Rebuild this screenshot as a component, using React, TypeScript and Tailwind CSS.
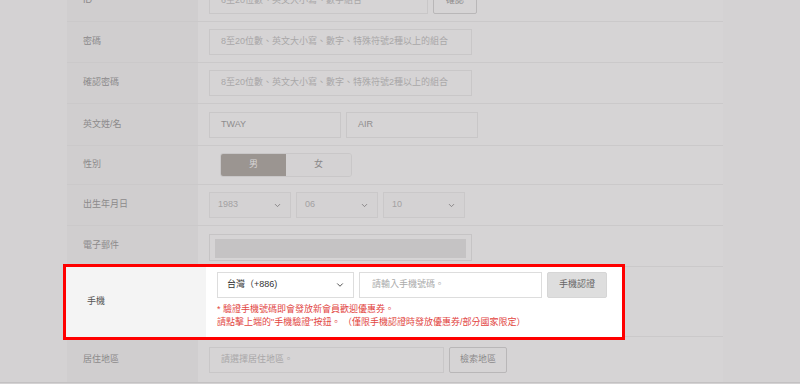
import React from 'react';
import { ChevronDown } from 'lucide-react';

const font = "font-['Liberation_Sans','Noto_Sans_CJK_TC',sans-serif]";

interface RowProps {
  label: string;
  h: string;
  children?: React.ReactNode;
}

const Row: React.FC<RowProps> = ({ label, h, children }) => (
  <div className={`flex border-b border-[#cbc9ca] ${h}`}>
    <div className="w-[131px] shrink-0 bg-[#d0cecf] flex items-center pl-[16px] text-[9px] text-[#8c8a8b]">
      {label}
    </div>
    <div className="flex-1 bg-[#d6d4d5] flex items-center pl-[11px]">{children}</div>
  </div>
);

const DimInput = ({ text, w, value }: { text: string; w: string; value?: boolean }) => (
  <div
    className={`${w} h-[26px] border border-[#c9c7c8] bg-[#d6d4d5] flex items-center px-[11px] text-[9px] ${
      value ? 'text-[#8e8c8d]' : 'text-[#a9a7a8]'
    }`}
  >
    {text}
  </div>
);

const DimSelect = ({ text }: { text: string }) => (
  <div className="w-[82px] h-[26px] border border-[#cac8c9] bg-[#d4d2d3] flex items-center justify-between pl-[8px] pr-[8px] text-[9px] text-[#a3a1a2]">
    <span>{text}</span>
    <ChevronDown size={9} strokeWidth={2.2} className="text-[#7c7a7b]" />
  </div>
);

const DimButton = ({ text, w }: { text: string; w: string }) => (
  <div
    className={`${w} h-[26px] border border-[#b9b7b8] rounded-[2px] bg-[#d6d4d5] flex items-center justify-center text-[9px] text-[#8c8a8b]`}
  >
    {text}
  </div>
);

export default function App() {
  return (
    <div className={`relative w-[800px] h-[384px] overflow-hidden bg-[#d4d2d3] ${font}`}>
      <div className="ml-[67px] w-[656px] -mt-[19px]">
        <Row label="ID" h="h-[41px]">
          <div className="flex gap-[5px] items-center">
            <DimInput w="w-[219px]" text="6至20位數、英文大小寫、數字組合" />
            <DimButton w="w-[44px]" text="確認" />
          </div>
        </Row>
        <Row label="密碼" h="h-[41px]">
          <DimInput w="w-[263px]" text="8至20位數、英文大小寫、數字、特殊符號2種以上的組合" />
        </Row>
        <Row label="確認密碼" h="h-[41px]">
          <DimInput w="w-[263px]" text="8至20位數、英文大小寫、數字、特殊符號2種以上的組合" />
        </Row>
        <Row label="英文姓/名" h="h-[42px]">
          <div className="flex gap-[5px]">
            <DimInput w="w-[132px]" text="TWAY" value />
            <DimInput w="w-[132px]" text="AIR" value />
          </div>
        </Row>
        <Row label="性別" h="h-[39px]">
          <div className="ml-[11px] flex w-[132px] h-[24px] rounded-[3px] border border-[#c9c7c8] overflow-hidden text-[9px]">
            <div className="w-1/2 bg-[#9b9591] text-[#d8d6d7] flex items-center justify-center">男</div>
            <div className="w-1/2 bg-[#d4d2d3] text-[#8a8889] flex items-center justify-center">女</div>
          </div>
        </Row>
        <Row label="出生年月日" h="h-[41px]">
          <div className="flex gap-[5px]">
            <DimSelect text="1983" />
            <DimSelect text="06" />
            <DimSelect text="10" />
          </div>
        </Row>
        <Row label="電子郵件" h="h-[41px]">
          <div className="w-[263px] h-[27px] mt-[8px] self-start border border-[#c6c4c5] pt-[4px] px-[5px] pb-[2px]">
            <div className="w-full h-full bg-[#c5c3c4]" />
          </div>
        </Row>
        <Row label="" h="h-[70px]" />
        <div className="flex h-[45px]">
          <div className="w-[131px] shrink-0 bg-[#d0cecf] flex items-center pl-[16px] text-[9px] text-[#8c8a8b]">
            居住地區
          </div>
          <div className="flex-1 bg-[#d6d4d5] flex items-center pl-[11px] gap-[5px]">
            <DimInput w="w-[235px]" text="請選擇居住地區。" />
            <DimButton w="w-[58px]" text="檢索地區" />
          </div>
        </div>
      </div>
      <div className="border-t border-[#c3c1c2] h-[2px]" />

      <div className="absolute left-[63px] top-[264px] w-[562px] h-[76px] border-[3px] border-[#ff0000] flex">
        <div className="w-[140px] shrink-0 bg-[#f4f4f4] flex items-center pl-[21px] text-[9px] text-[#555555]">
          手機
        </div>
        <div className="flex-1 bg-white pl-[11px] pt-[5px]">
          <div className="flex gap-[5px]">
            <div className="w-[137px] h-[26px] border border-[#dddddd] flex items-center justify-between pl-[9px] pr-[8px] text-[9px] text-[#333333]">
              <span>台灣（+886)</span>
              <ChevronDown size={10} strokeWidth={2.2} className="text-[#444444]" />
            </div>
            <div className="w-[183px] h-[26px] border border-[#dddddd] flex items-center px-[12px] text-[9px] text-[#aaaaaa]">
              請輸入手機號碼。
            </div>
            <div className="w-[60px] h-[26px] rounded-[2px] bg-[#dedede] border border-[#d6d6d6] flex items-center justify-center text-[9px] text-[#666666]">
              手機認證
            </div>
          </div>
          <div className="mt-[5px] text-[9px] leading-[13px] text-[#e2463f]">
            <div>* 驗證手機號碼即會發放新會員歡迎優惠券。</div>
            <div>請點擊上端的"手機驗證"按鈕。 （僅限手機認證時發放優惠券/部分國家限定）</div>
          </div>
        </div>
      </div>
    </div>
  );
}
